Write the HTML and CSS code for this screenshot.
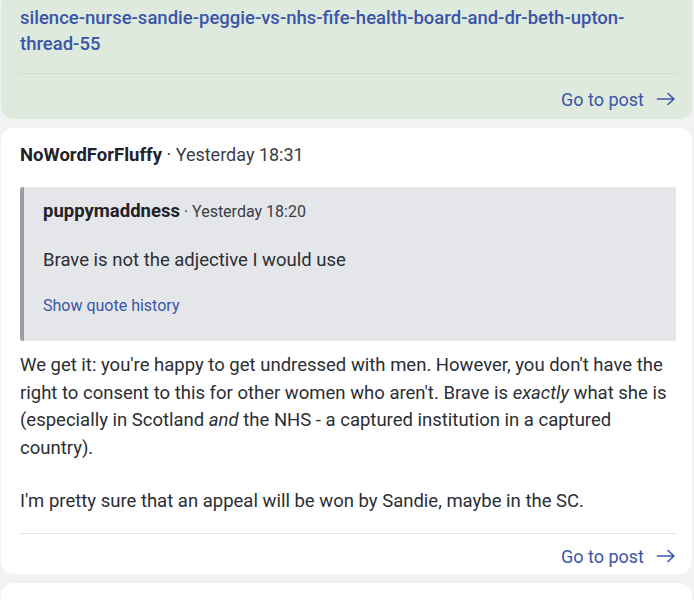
FILE: index.html
```html
<!DOCTYPE html>
<html>
<head>
<meta charset="utf-8">
<link rel="stylesheet" href="styles.css">
</head>
<body>
<div class="feed">
  <div class="card card-green">
    <a class="thread-link" href="#">silence-nurse-sandie-peggie-vs-nhs-fife-health-board-and-dr-beth-upton-thread-55</a>
    <div class="divider"></div>
    <div class="footer"><a class="goto" href="#">Go to post <span class="arrow"><svg width="20" height="16" viewBox="0 0 20 16"><path d="M1.5 8H18M12 2.5L18 8L12 13.5" fill="none" stroke="currentColor" stroke-width="1.6" stroke-linecap="round" stroke-linejoin="round"/></svg></span></a></div>
  </div>
  <div class="card">
    <div class="meta"><span class="author">NoWordForFluffy</span> · Yesterday 18:31</div>
    <div class="quote">
      <div class="meta qmeta"><span class="author">puppymaddness</span> · Yesterday 18:20</div>
      <p class="qtext">Brave is not the adjective I would use</p>
      <a class="history" href="#">Show quote history</a>
    </div>
    <p class="body">We get it: you're happy to get undressed with men. However, you don't have the right to consent to this for other women who aren't. Brave is <em>exactly</em> what she is (especially in Scotland <em>and</em> the NHS - a captured institution in a captured country).</p>
    <p class="body last">I'm pretty sure that an appeal will be won by Sandie, maybe in the SC.</p>
    <div class="divider"></div>
    <div class="footer"><a class="goto" href="#">Go to post <span class="arrow"><svg width="20" height="16" viewBox="0 0 20 16"><path d="M1.5 8H18M12 2.5L18 8L12 13.5" fill="none" stroke="currentColor" stroke-width="1.6" stroke-linecap="round" stroke-linejoin="round"/></svg></span></a></div>
  </div>
  <div class="card card-next"></div>
</div>
</body>
</html>
```
FILE: styles.css
```css
* { box-sizing: border-box; }
html, body { margin: 0; padding: 0; }
body {
  background: #f1f2f4;
  font-family: Roboto, "Liberation Sans", sans-serif;
  color: #202329;
  width: 694px;
  height: 600px;
  overflow: hidden;
}
.feed {
  display: flex;
  flex-direction: column;
  gap: 9px;
  padding: 0 2px 0 1px;
  margin-top: -8px;
}
.card {
  background: #ffffff;
  border-radius: 13px;
  padding: 15px 16px 0 19px;
}
.card-green {
  background: #dfeadf;
  padding-top: 13px;
}
.card-next { height: 40px; }
.thread-link {
  display: block;
  color: #3a55a8;
  font-size: 18.5px;
  line-height: 26px;
  text-decoration: none;
  font-weight: 500;
  padding-right: 40px;
}
.divider {
  height: 1px;
  background: #e3e5e8;
}
.card-green .thread-link { margin-bottom: 16px; }
.card-green .divider { background: #d2ddd2; }
.footer {
  display: flex;
  justify-content: flex-end;
  height: 40px;
  padding-top: 4px;
  align-items: center;
}
.card-green .footer { height: 45px; padding-top: 5px; }
.goto {
  color: #3a55a8;
  font-size: 18px;
  text-decoration: none;
  display: flex;
  align-items: center;
  gap: 12px;
}
.arrow { display: flex; }
.meta {
  font-size: 18px;
  line-height: 24px;
  color: #3a3d44;
}
.author { font-weight: 700; color: #1f2228; font-size: 18.5px; }
.quote {
  margin: 20px 0 11px;
  background: #e5e6ea;
  border-left: 4px solid #9a9ca4;
  border-radius: 3px;
  padding: 12px 18px 26px 19px;
}
.qmeta { font-size: 16px; }
.qtext {
  margin: 24px 0 0;
  font-size: 18.5px;
  line-height: 24px;
  color: #2b2e34;
}
.history {
  display: block;
  margin-top: 24px;
  font-size: 16px;
  color: #3a55a8;
  text-decoration: none;
}
.body {
  margin: 0 0 25.5px;
  font-size: 18.5px;
  line-height: 27.5px;
  color: #2b2e34;
}
.body.last { margin-bottom: 18px; }
```
